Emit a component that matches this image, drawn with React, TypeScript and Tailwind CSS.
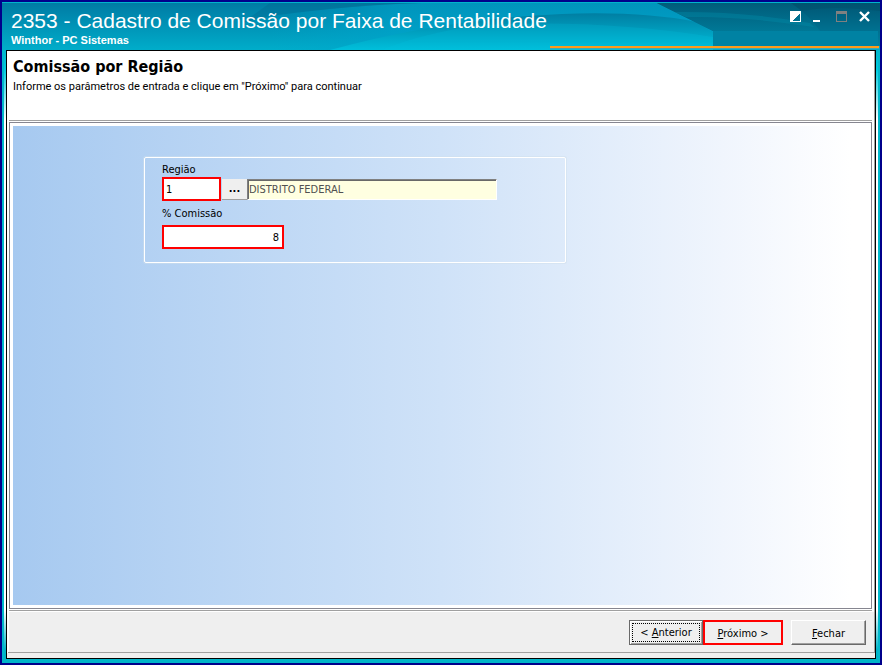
import React from 'react';

function HeaderArt() {
  return (
    <svg className="absolute inset-0 h-full w-full" viewBox="0 0 878 47" preserveAspectRatio="none" aria-hidden="true">
      <defs>
        <linearGradient id="base" x1="0" y1="0" x2="0" y2="1">
          <stop offset="0" stopColor="#007ba4" />
          <stop offset="1" stopColor="#00adca" />
        </linearGradient>
        <linearGradient id="light" x1="0" y1="0" x2="1" y2="0">
          <stop offset="0" stopColor="#00a4cc" stopOpacity="0" />
          <stop offset=".2" stopColor="#00a4cc" stopOpacity=".6" />
          <stop offset="1" stopColor="#00a4cc" stopOpacity=".6" />
        </linearGradient>
        <linearGradient id="wave" gradientUnits="userSpaceOnUse" x1="0" y1="10" x2="0" y2="47">
          <stop offset="0" stopColor="#007ea2" />
          <stop offset="1" stopColor="#00bfdb" />
        </linearGradient>
        <linearGradient id="dark" x1="0" y1="0" x2="0" y2="1">
          <stop offset="0" stopColor="#005674" />
          <stop offset="1" stopColor="#0080a0" />
        </linearGradient>
        <linearGradient id="tab" x1="0" y1="0" x2="0" y2="1">
          <stop offset="0" stopColor="#005c7a" />
          <stop offset="1" stopColor="#007896" />
        </linearGradient>
      </defs>
      <rect width="878" height="47" fill="url(#base)" />
      <path d="M268 13 Q360 1 420 0 H878 V47 H268 Z" fill="url(#light)" />
      <path d="M268 0 H420 Q350 2 268 13 L240 20 Z" fill="#006a92" opacity=".4" />
      <path d="M328 47 Q440 16 560 11 Q640 8 694 19 L711 29 V47 Z" fill="url(#wave)" />
      <path d="M480 22 Q600 16 711 34 V47 H380 Q420 30 480 22 Z" fill="#00c4e0" opacity=".2" />
      <path d="M655 0 L711 28 V43 H878 V0 Z" fill="url(#dark)" />
      <path d="M655 0 H789 Q806 11 818 28 H711 Z" fill="url(#tab)" />
      <path d="M672 9 Q740 8 808 20 L812 24 Q740 13 684 14 Z" fill="#0090ac" opacity=".35" />
      <path d="M789 0 H878 V8 Q830 2 800 8 Z" fill="#004f6c" opacity=".5" />
      <rect x="711" y="28" width="165" height="15" fill="#0082a3" />
    </svg>
  );
}

const btn =
  'h-[25px] border border-t-white border-l-white border-r-[#696969] border-b-[#696969] bg-[#efefef] pt-0.5 text-center shadow-[inset_-1px_-1px_0_#a0a0a0]';

export default function App() {
  return (
    <div className="flex min-h-screen flex-col border-2 border-[#00008b] bg-[#00b4c8] font-['DejaVu_Sans_Condensed','DejaVu_Sans',sans-serif] text-[11px] leading-4 text-black">
      <header className="relative flex h-12 shrink-0 justify-between border-t border-[#00b4cc] pr-[10px] pl-[9px] font-['Liberation_Sans',Arial,sans-serif] text-white">
        <HeaderArt />
        <div className="relative pt-1">
          <h1 className="text-[21px] leading-7 whitespace-nowrap">2353 - Cadastro de Comissão por Faixa de Rentabilidade</h1>
          <p className="text-[11px] leading-[10px] font-bold">Winthor - PC Sistemas</p>
        </div>
        <div className="relative flex items-start gap-3 pt-2">
          <button aria-label="Alternar tema" className="h-[11px] w-[11px]">
            <svg viewBox="0 0 11 11" width="11" height="11" shapeRendering="crispEdges">
              <path d="M0 0H11V11H0Z" fill="#fff" />
              <path d="M10 2V10H2Z" fill="#007090" />
            </svg>
          </button>
          <button aria-label="Minimizar" className="h-[11px] w-[11px]">
            <svg viewBox="0 0 11 11" width="11" height="11"><path d="M0 9H7V11H0Z" fill="#fff" /></svg>
          </button>
          <button aria-label="Maximizar" className="h-[11px] w-[11px]">
            <svg viewBox="0 0 11 11" width="11" height="11"><path d="M0 0H11V11H0ZM1 3V10H10V3Z" fill="#808080" fillRule="evenodd" /></svg>
          </button>
          <button aria-label="Fechar janela" className="h-[11px] w-[11px]">
            <svg viewBox="0 0 11 11" width="11" height="11"><path d="M1 1L10 10M10 1L1 10" stroke="#fff" strokeWidth="2.4" /></svg>
          </button>
        </div>
        <div className="absolute right-px bottom-px left-[548px] h-[3px] border-b border-[#40a8b0] bg-[#ff9b1a]" />
      </header>

      <div className="flex flex-1 flex-col border-x-2 border-[#00b8cc] bg-[linear-gradient(to_bottom,#00b4cc_0,#00cce0_20px,#fff_70px,#fff_560px,#00b4c8_600px)] px-0.5">
        <div className="flex flex-1 flex-col border border-black bg-white">
          <div className="flex flex-1 flex-col border-r border-[#a0a0a0]">
            <div className="h-[69px] px-[6px] pt-[6px]">
              <h2 className="text-base leading-5 font-bold">Comissão por Região</h2>
              <p className="pt-0.5 font-['Roboto','DejaVu_Sans_Condensed',sans-serif]">Informe os parâmetros de entrada e clique em "Próximo" para continuar</p>
            </div>
            <main className="mx-0.5 flex flex-1 flex-col border-y border-[#a0a0a0] py-px">
              <div className="flex flex-1 border border-[#868690] p-[3px]">
                <form className="flex-1 bg-[linear-gradient(to_right,#a6c9f0_0,#cfe2f8_50%,#f0f5fd_83%,#fff_98%)] pt-[31px] pl-[131px]">
                  <fieldset className="h-[106px] w-[422px] rounded-xs border border-white pt-1 pl-[17px] shadow-[0_0_0_1px_#d0dfec80]">
                    <label htmlFor="regiao" className="block h-[15px]">Região</label>
                    <div className="flex h-6 items-center">
                      <input id="regiao" defaultValue="1" className="h-6 w-[59px] border-2 border-[#ff0000] bg-white px-0.5" />
                      <button type="button" aria-label="Buscar região" className="ml-px h-[21px] w-[25px] border-b border-[#a0a0a0] bg-[#efefef] font-bold">...</button>
                      <input aria-label="Nome da região" readOnly defaultValue="DISTRITO FEDERAL" className="h-[21px] w-[250px] border border-t-[#808080] border-l-[#808080] border-r-white border-b-white bg-[#ffffe1] px-px text-[#505050] shadow-[inset_1px_1px_0_#696969]" />
                    </div>
                    <label htmlFor="comissao" className="block h-6 pt-[5px]">% Comissão</label>
                    <input id="comissao" defaultValue="8" className="block h-6 w-[122px] border-2 border-[#ff0000] bg-white px-[3px] text-right" />
                  </fieldset>
                </form>
              </div>
            </main>
            <footer className="ml-px flex h-[42px] items-start justify-end border-b border-[#a0a0a0] bg-[#efefef] pt-[9px] pr-2 shadow-[inset_1px_1px_0_#fff]">
              <button className="h-[25px] w-[74px] border border-[#696969] bg-[#efefef] p-0.5 shadow-[inset_1px_1px_0_#fff,inset_-1px_-1px_0_#a0a0a0]">
                <span className="block border border-dotted border-black pt-px">&lt; <u>A</u>nterior</span>
              </button>
              <button className="mr-2 h-[25px] w-20 border-2 border-[#ff0000] bg-[#efefef] pt-0.5"><u>P</u>róximo &gt;</button>
              <button className={`${btn} w-[75px]`}><u>F</u>echar</button>
            </footer>
          </div>
          <div className="h-[5px] bg-[#efefef]" />
        </div>
      </div>
      <div className="h-1 bg-[#00b4c8]" />
    </div>
  );
}
